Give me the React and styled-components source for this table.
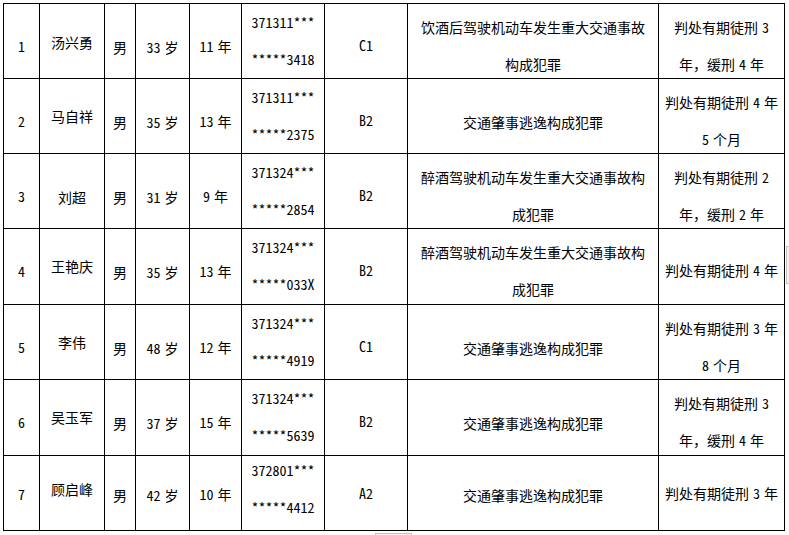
import React from "react";
import styled, { createGlobalStyle } from "styled-components";

const Global = createGlobalStyle`
  html, body { margin: 0; padding: 0; background: #fff; }
  body { font-family: "Noto Sans Mono CJK SC", "Noto Sans CJK SC", sans-serif; }
`;

const Page = styled.div`
  position: relative;
  width: 789px;
  height: 535px;
  padding: 3px 0 0 3px;
  box-sizing: border-box;
  overflow: hidden;
`;

const Table = styled.div`
  width: 782px;
  border-top: 1px solid #000;
  border-left: 1px solid #000;
  box-sizing: border-box;
  font-family: "Noto Sans Mono CJK SC", "Noto Sans CJK SC", sans-serif;
  font-size: 14px;
  color: #000;
`;

const Row = styled.div`
  display: grid;
  grid-template-columns: 36px 65px 31px 54px 52px 83px 83px 251px 126px;
  height: ${(p) => p.$h}px;
  border-bottom: 1px solid #000;
  box-sizing: border-box;
`;

const Cell = styled.div`
  display: flex;
  flex-direction: column;
  align-items: center;
  gap: 17px;
  padding-top: ${(p) => p.$pt}px;
  line-height: 20px;
  white-space: nowrap;
  word-spacing: -3px;
  border-right: 1px solid #000;
  box-sizing: border-box;
  overflow: hidden;
`;

const Handle = styled.div`
  position: absolute;
  left: ${(p) => p.$x}px;
  top: ${(p) => p.$y}px;
  width: ${(p) => p.$w}px;
  height: ${(p) => p.$hh}px;
  background: #f3f3f3;
  border: 1px solid #c4c4c4;
  box-sizing: border-box;
`;

const rows = [
  { no: "1", name: "汤兴勇", nt: 28, age: "33 岁", years: "11 年", id: ["371311***", "*****3418"], cls: "C1", crime: ["饮酒后驾驶机动车发生重大交通事故", "构成犯罪"], verdict: ["判处有期徒刑 3", "年，缓刑 4 年"], h: 75, s: 0 },
  { no: "2", name: "马自祥", nt: 27, age: "35 岁", years: "13 年", id: ["371311***", "*****2375"], cls: "B2", crime: ["交通肇事逃逸构成犯罪"], verdict: ["判处有期徒刑 4 年", "5 个月"], h: 75, s: 0 },
  { no: "3", name: "刘超", nt: 33, age: "31 岁", years: "9 年", id: ["371324***", "*****2854"], cls: "B2", crime: ["醉酒驾驶机动车发生重大交通事故构", "成犯罪"], verdict: ["判处有期徒刑 2", "年，缓刑 2 年"], h: 75, s: 0 },
  { no: "4", name: "王艳庆", nt: 27, age: "35 岁", years: "13 年", id: ["371324***", "*****033X"], cls: "B2", crime: ["醉酒驾驶机动车发生重大交通事故构", "成犯罪"], verdict: ["判处有期徒刑 4 年"], h: 76, s: 0 },
  { no: "5", name: "李伟", nt: 27, age: "48 岁", years: "12 年", id: ["371324***", "*****4919"], cls: "C1", crime: ["交通肇事逃逸构成犯罪"], verdict: ["判处有期徒刑 3 年", "8 个月"], h: 75, s: 0 },
  { no: "6", name: "吴玉军", nt: 27, age: "37 岁", years: "15 年", id: ["371324***", "*****5639"], cls: "B2", crime: ["交通肇事逃逸构成犯罪"], verdict: ["判处有期徒刑 3", "年，缓刑 4 年"], h: 76, s: 0 },
  { no: "7", name: "顾启峰", nt: 27, age: "42 岁", years: "10 年", id: ["372801***", "*****4412"], cls: "A2", crime: ["交通肇事逃逸构成犯罪"], verdict: ["判处有期徒刑 3 年"], h: 75, s: -4 },
];

const lines = (arr) => arr.map((t, i) => <span key={i}>{t}</span>);

export default function App() {
  return (
    <>
      <Global />
      <Page>
        <Table>
          {rows.map((r) => {
            const s = r.s;
            return (
              <Row key={r.no} $h={r.h}>
                <Cell $pt={32 + s}>{r.no}</Cell>
                <Cell $pt={r.nt + s}>{r.name}</Cell>
                <Cell $pt={33 + s}>男</Cell>
                <Cell $pt={33 + s}>{r.age}</Cell>
                <Cell $pt={32 + s}>{r.years}</Cell>
                <Cell $pt={8 + s}>{lines(r.id)}</Cell>
                <Cell $pt={31 + s}>{r.cls}</Cell>
                <Cell $pt={(r.crime.length > 1 ? 13 : 33) + s}>{lines(r.crime)}</Cell>
                <Cell $pt={(r.verdict.length > 1 ? 13 : 31) + s}>{lines(r.verdict)}</Cell>
              </Row>
            );
          })}
        </Table>
        <Handle $x={375} $y={533} $w={37} $hh={6} />
        <Handle $x={786} $y={246} $w={6} $hh={38} />
      </Page>
    </>
  );
}
